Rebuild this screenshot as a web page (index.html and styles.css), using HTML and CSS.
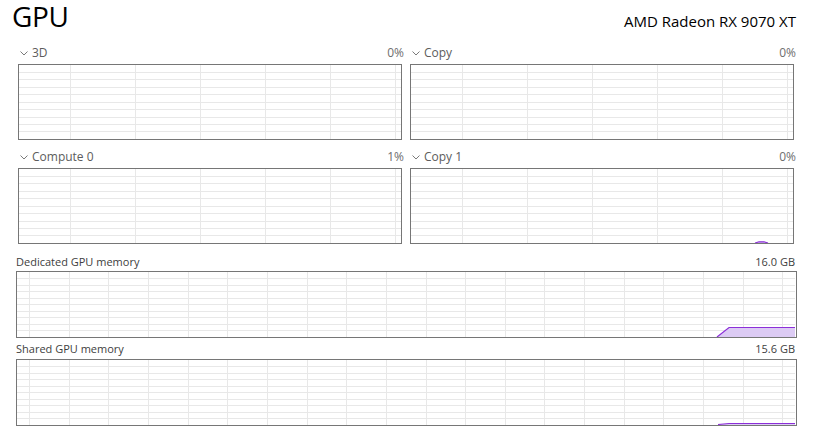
FILE: index.html
```html
<!DOCTYPE html>
<html>
<head>
<meta charset="utf-8">
<link rel="stylesheet" href="styles.css">
</head>
<body>
<div class="page">
  <header class="header">
    <h1 class="title">GPU</h1>
    <div class="device">AMD Radeon RX 9070 XT</div>
  </header>

  <div class="engines">
    <section class="engine">
      <div class="eng-label">
        <span class="eng-name"><svg class="chev" width="8" height="5" viewBox="0 0 8 5"><polyline points="0.5,0.5 4,4 7.5,0.5"/></svg>3D</span>
        <span class="eng-val">0%</span>
      </div>
      <div class="chart small">
        <svg width="382" height="74" viewBox="0 0 382 74"><path class="grid" d="M0 7.5H382M0 14.5H382M0 22.5H382M0 29.5H382M0 37.5H382M0 44.5H382M0 52.5H382M0 59.5H382M0 66.5H382M51.5 0V74M116.5 0V74M181.5 0V74M246.5 0V74M311.5 0V74M376.5 0V74"/></svg>
      </div>
    </section>
    <section class="engine">
      <div class="eng-label">
        <span class="eng-name"><svg class="chev" width="8" height="5" viewBox="0 0 8 5"><polyline points="0.5,0.5 4,4 7.5,0.5"/></svg>Copy</span>
        <span class="eng-val">0%</span>
      </div>
      <div class="chart small">
        <svg width="382" height="74" viewBox="0 0 382 74"><path class="grid" d="M0 7.5H382M0 14.5H382M0 22.5H382M0 29.5H382M0 37.5H382M0 44.5H382M0 52.5H382M0 59.5H382M0 66.5H382M51.5 0V74M116.5 0V74M181.5 0V74M246.5 0V74M311.5 0V74M376.5 0V74"/></svg>
      </div>
    </section>
    <section class="engine">
      <div class="eng-label">
        <span class="eng-name"><svg class="chev" width="8" height="5" viewBox="0 0 8 5"><polyline points="0.5,0.5 4,4 7.5,0.5"/></svg>Compute 0</span>
        <span class="eng-val">1%</span>
      </div>
      <div class="chart small">
        <svg width="382" height="74" viewBox="0 0 382 74"><path class="grid" d="M0 7.5H382M0 14.5H382M0 22.5H382M0 29.5H382M0 37.5H382M0 44.5H382M0 52.5H382M0 59.5H382M0 66.5H382M51.5 0V74M116.5 0V74M181.5 0V74M246.5 0V74M311.5 0V74M376.5 0V74"/></svg>
      </div>
    </section>
    <section class="engine">
      <div class="eng-label">
        <span class="eng-name"><svg class="chev" width="8" height="5" viewBox="0 0 8 5"><polyline points="0.5,0.5 4,4 7.5,0.5"/></svg>Copy 1</span>
        <span class="eng-val">0%</span>
      </div>
      <div class="chart small">
        <svg width="382" height="74" viewBox="0 0 382 74"><path class="grid" d="M0 7.5H382M0 14.5H382M0 22.5H382M0 29.5H382M0 37.5H382M0 44.5H382M0 52.5H382M0 59.5H382M0 66.5H382M51.5 0V74M116.5 0V74M181.5 0V74M246.5 0V74M311.5 0V74M376.5 0V74"/><path class="area" d="M344 74L348 72.8L353 72.8L357 74Z"/><path class="line" d="M344 74L348 72.8L353 72.8L357 74"/></svg>
      </div>
    </section>
  </div>

  <section class="memory dedicated">
    <div class="mem-label">
      <span>Dedicated GPU memory</span>
      <span>16.0 GB</span>
    </div>
    <div class="chart wide">
      <svg width="778" height="65" viewBox="0 0 778 65"><path class="grid" d="M0 6.5H778M0 13.5H778M0 19.5H778M0 26.5H778M0 32.5H778M0 39.5H778M0 45.5H778M0 52.5H778M0 58.5H778M12.5 0V65M52.5 0V65M91.5 0V65M131.5 0V65M171.5 0V65M210.5 0V65M250.5 0V65M290.5 0V65M329.5 0V65M369.5 0V65M409.5 0V65M448.5 0V65M488.5 0V65M527.5 0V65M567.5 0V65M607.5 0V65M646.5 0V65M686.5 0V65M726.5 0V65M765.5 0V65"/><path class="area" d="M700 65L712 55.5L778 55.5L778 65Z"/><path class="line" d="M700 65L712 55.5L778 55.5"/></svg>
    </div>
  </section>

  <section class="memory shared">
    <div class="mem-label">
      <span>Shared GPU memory</span>
      <span>15.6 GB</span>
    </div>
    <div class="chart wide">
      <svg width="778" height="65" viewBox="0 0 778 65"><path class="grid" d="M0 6.5H778M0 13.5H778M0 19.5H778M0 26.5H778M0 32.5H778M0 39.5H778M0 45.5H778M0 52.5H778M0 58.5H778M12.5 0V65M52.5 0V65M91.5 0V65M131.5 0V65M171.5 0V65M210.5 0V65M250.5 0V65M290.5 0V65M329.5 0V65M369.5 0V65M409.5 0V65M448.5 0V65M488.5 0V65M527.5 0V65M567.5 0V65M607.5 0V65M646.5 0V65M686.5 0V65M726.5 0V65M765.5 0V65"/><path class="area" d="M701 65L712 63.5L778 63.5L778 65Z"/><path class="line" d="M701 64.5L712 63.5L778 63.5"/></svg>
    </div>
  </section>
</div>
</body>
</html>
```

FILE: styles.css
```css
html, body {
  margin: 0;
  padding: 0;
  background: #ffffff;
}

body {
  font-family: "Open Sans", "Noto Sans", "DejaVu Sans", sans-serif;
  color: #1a1a1a;
}

.page {
  width: 817px;
  height: 433px;
  overflow: hidden;
  padding: 0 20px 0 16px;
  box-sizing: border-box;
}

.header {
  display: flex;
  justify-content: space-between;
  align-items: baseline;
  height: 42px;
  margin-left: -4px;
  box-sizing: border-box;
}

.title {
  margin: 0;
  font-size: 28px;
  line-height: 33px;
  font-weight: 400;
  color: #000;
  letter-spacing: -0.3px;
}

.device {
  font-size: 15px;
  color: #000;
  margin-right: 1px;
}

.engines {
  display: grid;
  grid-template-columns: 389px 389px;
  column-gap: 3px;
  row-gap: 6px;
}

.engine {
  display: flex;
  flex-direction: column;
}

.eng-label {
  display: flex;
  justify-content: space-between;
  align-items: center;
  height: 21px;
  padding: 0 1px 1px 4px;
  font-size: 12px;
  color: #5c5c5c;
}

.eng-name {
  display: flex;
  align-items: center;
}

.chev {
  margin-right: 4px;
  margin-top: 1px;
}

.chev polyline {
  fill: none;
  stroke: #7a7a7a;
  stroke-width: 1;
}

.eng-val {
  color: #6e6e6e;
}

.chart {
  border: 1px solid #767676;
  background: #fff;
}

.chart svg {
  display: block;
}

.chart.small {
  margin: 0 3px 0 2px;
}

.grid {
  fill: none;
  stroke: #e8e8e8;
  stroke-width: 1;
  shape-rendering: crispEdges;
}

.area {
  fill: #dccbf4;
  stroke: none;
}

.line {
  fill: none;
  stroke: #8c2fd8;
  stroke-width: 1.2;
}

.memory {
  display: flex;
  flex-direction: column;
}

.memory.dedicated {
  margin-top: 7px;
}

.mem-label {
  display: flex;
  justify-content: space-between;
  align-items: center;
  height: 20px;
  font-size: 11px;
  color: #404040;
  margin-right: 2px;
}

.memory.shared .mem-label {
  height: 21px;
}
```
